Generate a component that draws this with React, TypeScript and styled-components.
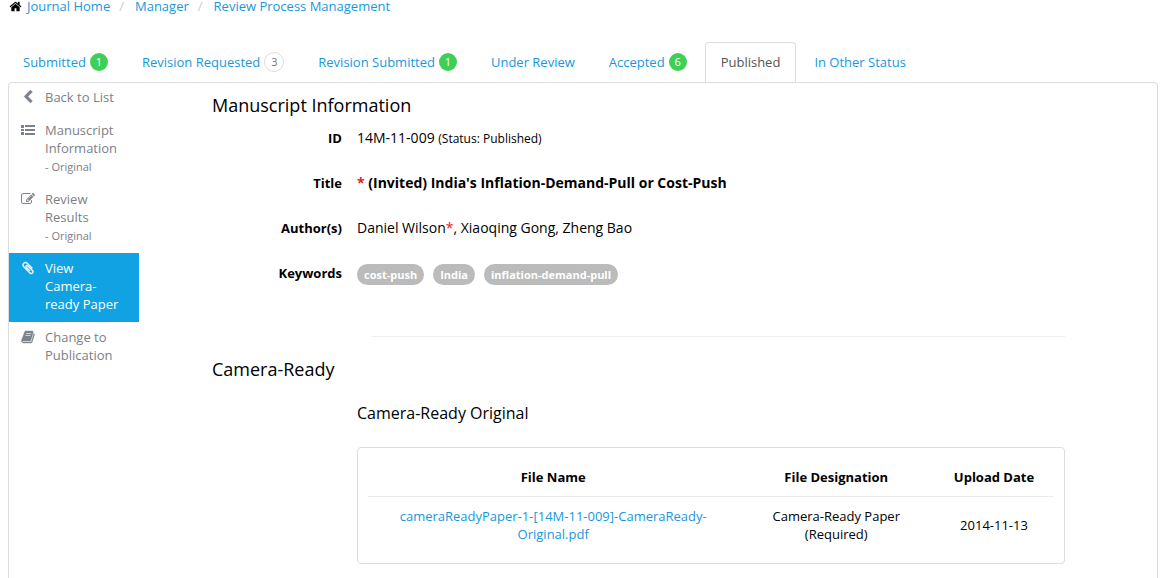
import React from 'react';
import styled, { createGlobalStyle, css } from 'styled-components';

const GlobalStyle = createGlobalStyle`
  * { box-sizing: border-box; }
  body {
    margin: 0;
    background: #fff;
    color: #000;
    font: 13px/18px "Open Sans", "Noto Sans", sans-serif;
  }
  a { color: #1997dc; text-decoration: none; }
  h2, h3, ul, ol, dl, dd { margin: 0; padding: 0; font-weight: 400; }
  ul, ol { list-style: none; }
`;

const Page = styled.div`
  display: flex;
  flex-direction: column;
  min-height: 100vh;
  padding: 0 8px;
`;

const Breadcrumb = styled.ol`
  display: flex;
  align-items: center;
  height: 12px;
  line-height: 12px;
  margin-bottom: 30px;
`;

const Crumb = styled.li`
  display: flex;
  align-items: center;
  & + &::before {
    content: '/';
    color: #ccc;
    padding: 0 11px 0 9px;
  }
  svg { margin: 0 5px 0 1px; }
`;

const Tabs = styled.nav`
  display: flex;
  gap: 2px;
  margin: 0 0 -1px -1px;
`;

const Tab = styled.a<{ $active?: boolean }>`
  display: flex;
  align-items: center;
  gap: 4px;
  height: 41px;
  padding: 0 15px 2px;
  border: 1px solid transparent;
  white-space: nowrap;
  ${(p) =>
    p.$active &&
    css`
      color: #555;
      background: #fff;
      border-color: #ddd #ddd #fff;
      border-radius: 4px 4px 0 0;
    `}
`;

const Badge = styled.span<{ $muted?: boolean }>`
  display: flex;
  align-items: center;
  justify-content: center;
  width: 18px;
  height: 18px;
  border-radius: 50%;
  font-size: 11px;
  color: #fff;
  background: #3fcf56;
  ${(p) =>
    p.$muted &&
    css`
      width: 20px;
      height: 20px;
      color: #777;
      background: #fff;
      border: 1px solid #ddd;
    `}
`;

const Panel = styled.div`
  display: flex;
  flex: 1;
  border: 1px solid #ddd;
  border-bottom: 0;
  border-radius: 4px 4px 0 0;
`;

const Sidebar = styled.nav`
  flex: 0 0 130px;
  margin-top: -1px;
`;

const SideLink = styled.a<{ $active?: boolean }>`
  display: flex;
  gap: 10px;
  padding: 6px 15px 9px 12px;
  color: ${(p) => (p.$active ? '#fff' : '#7d8087')};
  background: ${(p) => (p.$active ? '#10a2e3' : 'transparent')};
  svg {
    flex: none;
    margin-top: 2px;
    color: ${(p) => (p.$active ? '#fff' : '#7b828c')};
  }
  small { display: block; height: 18px; font-size: 11px; line-height: 20px; }
`;

const Main = styled.main`
  flex: 1;
  padding: 10px 92px 0 73px;
`;

const Heading = styled.h2`
  font-size: 18px;
  line-height: 24px;
`;

const SubHeading = styled.h3`
  margin: 20px 0 22px 145px;
  font-size: 16px;
  line-height: 24px;
`;

const Details = styled.dl`
  display: grid;
  grid-template-columns: 130px 1fr;
  column-gap: 15px;
  row-gap: 21px;
  margin-top: 9px;
  line-height: 24px;
`;

const Term = styled.dt`
  text-align: right;
  font-weight: 700;
`;

const Value = styled.dd<{ $strong?: boolean }>`
  font-size: 14px;
  ${(p) => p.$strong && 'font-weight: 700;'}
  small { font-size: 12px; line-height: 12px; }
`;

const Star = styled.span`
  color: #e02222;
`;

const Keywords = styled.dd`
  display: flex;
  align-items: center;
  gap: 9px;
  padding-top: 3px;
`;

const Keyword = styled.span`
  padding: 0 7px;
  border-radius: 11px;
  color: #fff;
  background: #bbb;
  font-size: 11px;
  font-weight: 700;
  line-height: 21px;
`;

const Divider = styled.hr`
  margin: 51px 0 20px 160px;
  border: 0;
  border-top: 1px solid #eee;
`;

const TableBox = styled.div`
  margin-left: 145px;
  padding: 10px;
  border: 1px solid #ddd;
  border-radius: 4px;
`;

const Table = styled.table`
  width: 100%;
  table-layout: fixed;
  border-spacing: 0;
  text-align: center;
  th, td { padding: 10px 15px; }
  th { border-bottom: 1px solid #eaeaea; }
  th:nth-child(1) { width: 54%; }
  th:nth-child(3) { width: 120px; }
  td:nth-child(1) { padding: 10px 30px; }
`;

const icons = {
  home: 'M1472 992v480q0 26-19 45t-45 19h-384v-384h-256v384h-384q-26 0-45-19t-19-45v-480q0-1 .5-3t.5-3l575-474 575 474q1 2 1 6zm223-69l-62 74q-8 9-21 11h-3q-13 0-21-7l-692-577-692 577q-12 8-24 7-13-2-21-11l-62-74q-8-10-7-23.500t11-21.500l719-599q32-26 76-26t76 26l244 204v-195q0-14 9-23t23-9h192q14 0 23 9t9 23v408l219 182q10 8 11 21.500t-7 23.500z',
  back: 'M1427 301l-531 531 531 531q19 19 19 45t-19 45l-166 166q-19 19-45 19t-45-19l-742-742q-19-19-19-45t19-45l742-742q19-19 45-19t45 19l166 166q19 19 19 45t-19 45z',
  list: 'M0 256h384v384H0zM512 256h1280v256H512zM0 768h384v256H0zM512 768h1280v256H512zM0 1152h384v384H0zM512 1280h1280v256H512z',
  edit: 'M888 1184l116-116-152-152-116 116v56h96v96h56zm440-720q-16-16-33 1l-350 350q-17 17-1 33t33-1l350-350q17-17 1-33zm80 594v190q0 119-84.500 203.500t-203.500 84.500h-832q-119 0-203.500-84.500t-84.500-203.500v-832q0-119 84.500-203.500t203.500-84.500h832q63 0 117 25 15 7 18 23 3 17-9 29l-49 49q-14 14-32 8-23-6-45-6h-832q-66 0-113 47t-47 113v832q0 66 47 113t113 47h832q66 0 113-47t47-113v-126q0-13 9-22l64-64q15-15 35-7t20 29zm-96-738l288 288-672 672h-288v-288zm444 132l-92 92-288-288 92-92q28-28 68-28t68 28l152 152q28 28 28 68t-28 68z',
  clip: 'M1596 1385q0 117-79 196t-196 79q-135 0-235-100l-777-776q-113-115-113-271 0-159 110-270t269-111q158 0 273 113l605 606q10 10 10 22 0 16-30.500 46.500t-46.500 30.500q-13 0-23-10l-606-607q-79-77-181-77-106 0-179 75t-73 181q0 105 76 181l776 777q63 63 145 63 64 0 106-42t42-106q0-82-63-145l-581-581q-26-24-60-24-29 0-48 19t-19 48q0 32 25 59l410 410q10 10 10 22 0 16-31 47t-47 31q-12 0-22-10l-410-410q-63-61-63-149 0-82 57-139t139-57q88 0 149 63l581 581q100 98 100 235z',
  book: 'M1703 478q40 57 18 129l-275 906q-19 64-76.500 107.500t-122.500 43.500h-923q-77 0-148.500-53.500t-99.500-131.500q-24-67-2-127 0-4 3-27t4-37q1-8-3-21.500t-3-19.500q2-11 8-21t16.500-23.500 16.500-23.500q23-38 45-91.500t30-91.500q3-10 .5-30t-.5-28q3-11 17-28t17-23q21-36 42-92t25-90q1-9-2.500-32t.5-28q4-13 22-30.500t22-22.500q19-26 42.500-84.500t27.500-96.500q1-8-3-25.500t-2-26.500q2-8 9-18t18-23 17-21q8-12 16.500-30.500t15-35 16-36 19.500-32 26.500-23.500 36-11.500 47.500 5.500l-1 3q38-9 51-9h761q74 0 114 56t18 130l-274 906q-36 119-71.500 153.500t-128.500 34.500h-869q-27 0-38 15-11 16-1 43 24 70 144 70h923q29 0 56-15.500t35-41.500l300-987q7-22 5-57 38 15 59 43zm-1064 2q-4 13 2 22.500t20 9.500h608q13 0 25.500-9.500t16.500-22.500l21-64q4-13-2-22.500t-20-9.500h-608q-13 0-25.500 9.500t-16.500 22.500zm-83 256q-4 13 2 22.500t20 9.500h608q13 0 25.500-9.500t16.500-22.500l21-64q4-13-2-22.500t-20-9.500h-608q-13 0-25.500 9.500t-16.500 22.500z',
};

type IconName = keyof typeof icons;

const strokes: Partial<Record<IconName, number>> = { clip: 60, book: 50, back: 50 };

const Icon = ({ name, size = 14 }: { name: IconName; size?: number }) => (
  <svg
    width={size}
    height={size}
    viewBox="0 0 1792 1792"
    fill="currentColor"
    stroke="currentColor"
    strokeWidth={strokes[name] ?? 0}
    aria-hidden="true"
  >
    <path d={icons[name]} />
  </svg>
);

const tabs: { label: string; count?: number; muted?: boolean; active?: boolean }[] = [
  { label: 'Submitted', count: 1 },
  { label: 'Revision Requested', count: 3, muted: true },
  { label: 'Revision Submitted', count: 1 },
  { label: 'Under Review' },
  { label: 'Accepted', count: 6 },
  { label: 'Published', active: true },
  { label: 'In Other Status' },
];

const sideItems: { icon: IconName; label: string; note?: string; active?: boolean }[] = [
  { icon: 'back', label: 'Back to List' },
  { icon: 'list', label: 'Manuscript Information', note: '- Original' },
  { icon: 'edit', label: 'Review Results', note: '- Original' },
  { icon: 'clip', label: 'View Camera-ready Paper', active: true },
  { icon: 'book', label: 'Change to Publication' },
];

export default function App() {
  return (
    <Page>
      <GlobalStyle />
      <Breadcrumb>
        <Crumb>
          <Icon name="home" size={13} />
          <a href="#home">Journal Home</a>
        </Crumb>
        <Crumb><a href="#manager">Manager</a></Crumb>
        <Crumb><a href="#review">Review Process Management</a></Crumb>
      </Breadcrumb>
      <Tabs>
        {tabs.map((t) => (
          <Tab key={t.label} href="#tab" $active={t.active}>
            {t.label}
            {t.count !== undefined && <Badge $muted={t.muted}>{t.count}</Badge>}
          </Tab>
        ))}
      </Tabs>
      <Panel>
        <Sidebar>
          {sideItems.map((s) => (
            <SideLink key={s.label} href="#section" $active={s.active}>
              <Icon name={s.icon} />
              <span>
                {s.label}
                {s.note && <small>{s.note}</small>}
              </span>
            </SideLink>
          ))}
        </Sidebar>
        <Main>
          <Heading>Manuscript Information</Heading>
          <Details>
            <Term>ID</Term>
            <Value>14M-11-009 <small>(Status: Published)</small></Value>
            <Term>Title</Term>
            <Value $strong><Star>*</Star> (Invited) India's Inflation-Demand-Pull or Cost-Push</Value>
            <Term>Author(s)</Term>
            <Value>Daniel Wilson<Star>*</Star>, Xiaoqing Gong, Zheng Bao</Value>
            <Term>Keywords</Term>
            <Keywords>
              <Keyword>cost-push</Keyword>
              <Keyword>India</Keyword>
              <Keyword>inflation-demand-pull</Keyword>
            </Keywords>
          </Details>
          <Divider />
          <Heading>Camera-Ready</Heading>
          <SubHeading>Camera-Ready Original</SubHeading>
          <TableBox>
            <Table>
              <thead>
                <tr>
                  <th>File Name</th>
                  <th>File Designation</th>
                  <th>Upload Date</th>
                </tr>
              </thead>
              <tbody>
                <tr>
                  <td><a href="#file">cameraReadyPaper-1-[14M-11-009]-CameraReady-Original.pdf</a></td>
                  <td>Camera-Ready Paper (Required)</td>
                  <td>2014-11-13</td>
                </tr>
              </tbody>
            </Table>
          </TableBox>
        </Main>
      </Panel>
    </Page>
  );
}
